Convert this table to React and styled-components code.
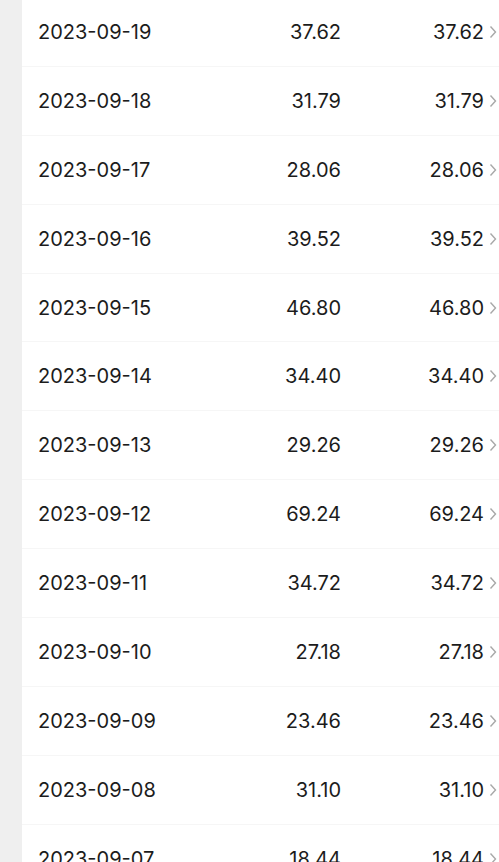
import styled, { createGlobalStyle } from 'styled-components';

const GlobalStyle = createGlobalStyle`
  html, body {
    margin: 0;
    padding: 0;
    background: #ffffff;
    overflow: hidden;
  }
  body {
    font-family: Inter, "Noto Sans", "Noto Sans CJK SC", sans-serif;
  }
`;

const Page = styled.div`
  display: flex;
  width: 499px;
  height: 862px;
  overflow: hidden;
`;

const Sidebar = styled.div`
  width: 22px;
  flex-shrink: 0;
  background: #efefef;
`;

const List = styled.div`
  flex: 1;
  display: flex;
  flex-direction: column;
  margin-top: -2px;
  background: #ffffff;
`;

const Row = styled.div`
  display: grid;
  grid-template-columns: 1fr 100px 143px 15px;
  align-items: center;
  height: 68.9px;
  flex-shrink: 0;
  padding-left: 16px;
  border-bottom: 1px solid #f6f6f6;
  box-sizing: border-box;
  font-size: 20px;
  font-weight: 380;
  color: #1c1c1c;
`;

const Cell = styled.span`
  text-align: ${(p) => (p.$right ? 'right' : 'left')};
  white-space: nowrap;
`;

const Chevron = styled.span`
  display: flex;
  justify-content: flex-end;
  padding-right: 2px;
`;

const rows = [
  ['2023-09-19', '37.62'],
  ['2023-09-18', '31.79'],
  ['2023-09-17', '28.06'],
  ['2023-09-16', '39.52'],
  ['2023-09-15', '46.80'],
  ['2023-09-14', '34.40'],
  ['2023-09-13', '29.26'],
  ['2023-09-12', '69.24'],
  ['2023-09-11', '34.72'],
  ['2023-09-10', '27.18'],
  ['2023-09-09', '23.46'],
  ['2023-09-08', '31.10'],
  ['2023-09-07', '18.44'],
];

function Arrow() {
  return (
    <svg width="8" height="14" viewBox="0 0 8 14">
      <path d="M1.5 1.5 L6.5 7 L1.5 12.5" fill="none" stroke="#a8a8a8" strokeWidth="1.4" />
    </svg>
  );
}

export default function App() {
  return (
    <Page>
      <GlobalStyle />
      <Sidebar />
      <List>
        {rows.map(([date, value]) => (
          <Row key={date}>
            <Cell>{date}</Cell>
            <Cell $right>{value}</Cell>
            <Cell $right>{value}</Cell>
            <Chevron>
              <Arrow />
            </Chevron>
          </Row>
        ))}
      </List>
    </Page>
  );
}
